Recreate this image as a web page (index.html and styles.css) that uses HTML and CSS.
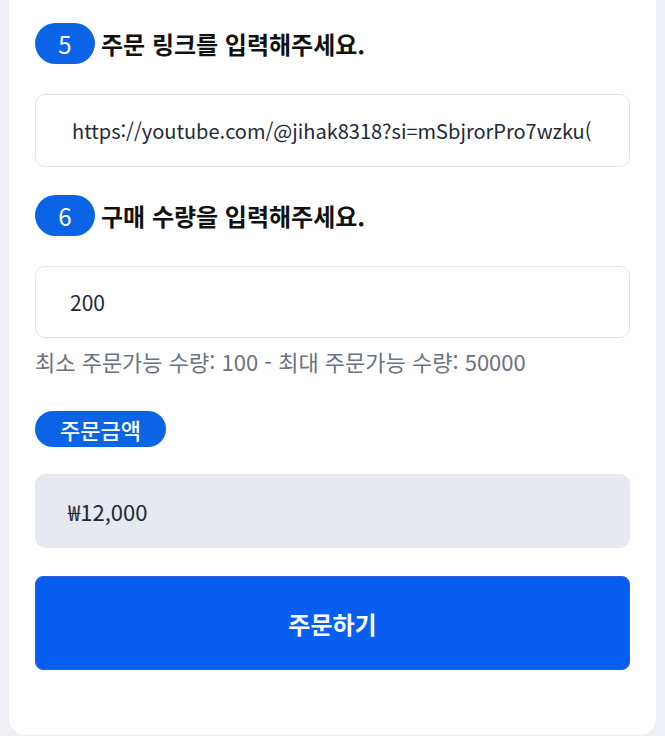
FILE: index.html
```html
<!DOCTYPE html>
<html lang="ko">
<head>
    <meta charset="UTF-8">
    <meta name="viewport" content="width=device-width, initial-scale=1.0">
    <title>주문하기</title>
    <link rel="stylesheet" href="styles.css">
</head>
<body>
    <div class="card">
        <div class="step-title">
            <span class="step-num">5</span>
            <h3>주문 링크를 입력해주세요.</h3>
        </div>
        <input class="field" type="text" value="https://youtube.com/@jihak8318?si=mSbjrorPro7wzku(">

        <div class="step-title">
            <span class="step-num">6</span>
            <h3>구매 수량을 입력해주세요.</h3>
        </div>
        <input class="field field-qty" type="text" value="200">
        <p class="hint">최소 주문가능 수량: 100 - 최대 주문가능 수량: 50000</p>

        <span class="pill">주문금액</span>
        <div class="price">₩12,000</div>

        <button class="order-btn" type="button">주문하기</button>
    </div>
</body>
</html>
```

FILE: styles.css
```css
body {
    margin: 0;
    background: #eef0f5;
    font-family: "Noto Sans CJK KR", "Noto Sans", sans-serif;
    color: #111827;
}
.card {
    margin: 0 9px 0 9px;
    background: #fff;
    border-radius: 0 0 16px 16px;
    padding: 23px 26px 65px 26px;
    display: flex;
    flex-direction: column;
    align-items: flex-start;
}
.step-title {
    display: flex;
    align-items: center;
    gap: 6px;
    height: 41px;
    margin-bottom: 30px;
}
.step-num {
    width: 60px;
    height: 41px;
    border-radius: 21px;
    background: #0b63e6;
    color: #fff;
    font-size: 24px;
    font-weight: 400;
    display: flex;
    align-items: center;
    justify-content: center;
}
.step-title h3 {
    margin: 0;
    font-size: 24px;
    font-weight: 700;
    color: #111;
}
.field {
    width: 100%;
    height: 73px;
    box-sizing: border-box;
    border: 1px solid #e3e5ea;
    border-radius: 10px;
    padding: 0 36px;
    margin: 0 0 28px 0;
    font-family: "Noto Sans CJK KR", "Noto Sans", sans-serif;
    font-size: 20px;
    color: #1f2937;
    background: #fff;
    outline: none;
}
.field-qty {
    height: 72px;
    margin-bottom: 8px;
    font-size: 21px;
    padding-left: 34px;
}
.hint {
    margin: 0 0 35px 0;
    font-size: 22px;
    line-height: 30px;
    color: #6b7280;
}
.pill {
    height: 36px;
    padding: 0 25px;
    border-radius: 18px;
    background: #0b63e6;
    color: #fff;
    font-size: 22px;
    font-weight: 500;
    display: flex;
    align-items: center;
    margin-bottom: 27px;
}
.price {
    width: 100%;
    height: 74px;
    box-sizing: border-box;
    background: #e6e9f0;
    border-radius: 10px;
    padding: 0 33px;
    display: flex;
    align-items: center;
    font-size: 22px;
    color: #1f2937;
    margin-bottom: 28px;
}
.order-btn {
    width: 100%;
    height: 94px;
    border: 1px solid #2f5fe0;
    border-radius: 8px;
    background: #075ef0;
    color: #fff;
    font-family: "Noto Sans CJK KR", "Noto Sans", sans-serif;
    font-size: 24px;
    font-weight: 700;
}
```
